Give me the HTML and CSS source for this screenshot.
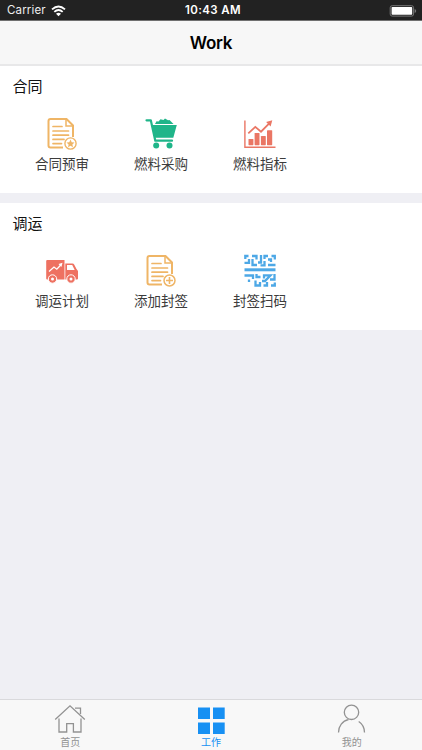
FILE: index.html
```html
<!DOCTYPE html>
<html lang="zh-CN">
<head>
<meta charset="utf-8">
<title>Work</title>
<link rel="stylesheet" href="styles.css">
</head>
<body>
<div class="app">
  <header class="status">
    <div class="carrier">Carrier
      <svg width="15" height="12" viewBox="0 0 15 12" fill="none" stroke="#fff" stroke-width="1.9"><path d="M1 4.4Q7.5-1.2 14 4.4M3.3 6.9Q7.5 3.2 11.7 6.9"/><path d="M5 8.8Q7.5 6.8 10 8.8L7.5 11.3Z" fill="#fff" stroke="none"/></svg>
    </div>
    <div class="time">10:43 AM</div>
    <div class="power">
      <svg width="28" height="12" viewBox="0 0 28 12"><rect x="1.2" y=".7" width="23.4" height="10.4" rx="2" fill="none" stroke="#777" stroke-width="1"/><rect x="2.6" y="2.1" width="20.6" height="7.6" rx=".7" fill="#fff"/><path d="M25.6 4v4q1.600-.6 1.600-2t-1.600-2Z" fill="#777"/></svg>
    </div>
  </header>
  <h1 class="navbar">Work</h1>
  <main class="content">
    <section class="group">
      <h2>合同</h2>
      <div class="grid">
        <div class="item">
          <svg viewBox="0 0 34 34" fill="none" stroke="#efb566" stroke-width="2"><path d="M18 30.500H5.500Q3.500 30.500 3.500 28.500V4Q3.500 2 5.500 2H21.500L28 8.500V20"/><path d="M21 2v7h7" stroke-width="1.500"/><path d="M8 9.500h9M8 14h15.500M8 18.200h15.500M8 22.400h11M8 26.600h8.500" stroke-width="1.700" stroke-linecap="round"/><circle cx="25.500" cy="26.500" r="5.600" stroke-width="1.400"/><path d="m25.500 22.600 1.200 2.600 2.800.3-2.100 1.900.6 2.800-2.500-1.400-2.500 1.400.6-2.800-2.100-1.900 2.800-.3Z" fill="#efb566" stroke="none"/></svg>
          <span>合同预审</span>
        </div>
        <div class="item">
          <svg viewBox="0 0 34 34" fill="#1fb589"><path d="M2.500 3.300H6.800L11.300 23.700H28" fill="none" stroke="#1fb589" stroke-width="2.200" stroke-linecap="round" stroke-linejoin="round"/><path d="M7.500 8H32.800L29.300 20.700H10.500ZM11 6.900 12.500 4.300 14.500 4.400 16.500 2.200 19.500 2.900 21 1.500 24 3.200 25.500 2.900 29.500 6.900Z"/><circle cx="12.200" cy="28.500" r="3"/><circle cx="25.500" cy="28.500" r="3"/></svg>
          <span>燃料采购</span>
        </div>
        <div class="item">
          <svg viewBox="0 0 34 34" fill="#ea7664"><path d="M1.900 3.500V30.300H32.500" fill="none" stroke="#ea7664" stroke-width="1.400"/><rect x="5.500" y="22" width="4.900" height="6.200" rx=".6"/><rect x="11.600" y="16" width="4.900" height="12.200" rx=".6"/><rect x="17.900" y="19" width="4.900" height="9.200" rx=".6"/><rect x="24" y="13.200" width="5.200" height="15" rx=".6"/><path d="M5.300 16.300 12.300 9.900 18 14.700 26.500 6.200" fill="none" stroke="#ea7664" stroke-width="1.800"/><path d="m29.300 3.200-6.200 1.700 4.500 4.500Z"/></svg>
          <span>燃料指标</span>
        </div>
      </div>
    </section>
    <section class="group">
      <h2>调运</h2>
      <div class="grid">
        <div class="item">
          <svg viewBox="0 -1 34 34"><path d="M2.200 5H19.500V24.500H2.200Q1.200 24.500 1.200 23.500V6Q1.200 5 2.200 5ZM20.300 8.500H27.500Q28.600 8.500 29.300 9.700L31.500 14 33 16V23.500Q33 24.500 32 24.500H20.300Z" fill="#ee7161"/><path d="M22 10H27.200L29.700 15H22Z" fill="#fff"/><path d="M4 16.500 9 12 11.800 14.200 16 9.700" fill="none" stroke="#fff" stroke-width="1.300"/><path d="m17.500 7.700-4 1.300 2.900 2.900Z" fill="#fff"/><g fill="#ee7161" stroke="#fff" stroke-width="1"><circle cx="7.500" cy="24" r="4.200"/><circle cx="26" cy="24" r="4.200"/></g><circle cx="7.500" cy="24" r="1.500" fill="#fff"/><circle cx="26" cy="24" r="1.500" fill="#fff"/></svg>
          <span>调运计划</span>
        </div>
        <div class="item">
          <svg viewBox="0 0 34 34" fill="none" stroke="#efb566" stroke-width="2"><path d="M18 30.500H5.500Q3.500 30.500 3.500 28.500V4Q3.500 2 5.500 2H21.500L28 8.500V20"/><path d="M21 2v7h7" stroke-width="1.500"/><path d="M8 9.500h9M8 14h15.500M8 18.200h15.500M8 22.400h11M8 26.600h8.500" stroke-width="1.700" stroke-linecap="round"/><circle cx="25.500" cy="26.500" r="5.500" stroke-width="1.500"/><path d="M25.500 23v7M22 26.500h7" stroke-width="1.600"/></svg>
          <span>添加封签</span>
        </div>
        <div class="item">
          <svg viewBox="0 0 34 34" fill="none" stroke="#4da8e6" stroke-width="2.300"><path d="M1.500 15.800H32.500" stroke-width="3"/><path d="M5.500 2H2.300V5M9 2H13.500V5.500M18 1V8.500H15M21.500 5V2H25M28.500 2H31.800V5.500M1.500 8.800H6V5M9.500 5V11H14M17.500 11.300H21.500V7M25 5.500H28V8M25 11H32.500"/><path d="M1.500 21.500H10V25M6 25.500V28M13.500 20V23H17.500M21 24.500V21.300H27.500L22 27H19M31.500 20V25.500H27M12.500 26.500V31.500H17V28M20.500 31.500H24V28M28 31.500H31.800V28.500"/></svg>
          <span>封签扫码</span>
        </div>
      </div>
    </section>
  </main>
  <nav class="tabs">
    <div class="tab">
      <svg width="32" height="30" viewBox="0 0 32 30" fill="none" stroke="#929292" stroke-width="1.300"><path d="M1.200 15.500 16 1.800 30.800 15.500M5 14.500V28H12.700V19.700H19.400V28H27V14.500M21 4.200H26.500V10"/></svg>
      <span>首页</span>
    </div>
    <div class="tab active">
      <svg width="32" height="30" viewBox="0 0 32 30" fill="#1790f3"><path d="M3 3.500H15V15H3ZM18 3.500H29.700V15H18ZM3 18.500H15V30H3ZM18 18.500H29.700V30H18Z"/></svg>
      <span>工作</span>
    </div>
    <div class="tab">
      <svg width="32" height="30" viewBox="0 0 32 30" fill="none" stroke="#929292" stroke-width="1.300"><circle cx="15.500" cy="8.300" r="7.200"/><path d="M2.500 28.500C2.500 22 6.500 16.800 12.500 15.700M22.700 17.500Q28.500 21.300 28.500 28.500"/></svg>
      <span>我的</span>
    </div>
  </nav>
</div>
</body>
</html>
```
FILE: styles.css
```css
* { box-sizing: border-box; }
body { margin: 0; font-family: Inter, "Noto Sans CJK SC", sans-serif; }
svg { display: block; }
.app { width: 422px; height: 750px; display: flex; flex-direction: column; background: #efeff4; }
.status { height: 21px; display: grid; grid-template-columns: 1fr 1fr 1fr; align-items: center; padding: 1px 5px 0 7px; background: #222; border-bottom: 1px solid #707070; color: #eee; font-size: 11.5px; line-height: 19px; }
.carrier { display: flex; align-items: center; gap: 5px; letter-spacing: .15px; }
.time { padding-left: 2px; text-align: center; font-weight: 600; letter-spacing: .4px; color: #fff; }
.power { display: flex; justify-content: flex-end; }
.navbar { height: 45px; margin: 0; background: #f7f7f7; border-bottom: 2px solid #e8e8e9; text-align: center; font-size: 17px; font-weight: 600; letter-spacing: -.3px; line-height: 44px; color: #000; }
.content { flex: 1; display: flex; flex-direction: column; gap: 10px; }
.group { height: 127px; padding: 9px 12px 0 12.5px; background: #fff; }
.group h2 { margin: 0; font-size: 15px; font-weight: 400; line-height: 24px; color: #111; }
.grid { display: grid; grid-template-columns: repeat(4, 99px); margin-top: 18px; }
.item { display: flex; flex-direction: column; align-items: center; font-size: 13.5px; line-height: 20px; color: #3c3c3c; }
.item svg { width: 34px; height: 34px; margin-bottom: 3px; }
.tabs { height: 51px; display: grid; grid-template-columns: repeat(3, 1fr); background: #f8f8f8; border-top: 1px solid #d9d9dc; }
.tab { display: flex; flex-direction: column; align-items: center; padding-top: 4px; font-size: 10px; line-height: 14px; color: #929292; }
.tab span { margin-top: 1px; }
.active { color: #1790f3; }
```
